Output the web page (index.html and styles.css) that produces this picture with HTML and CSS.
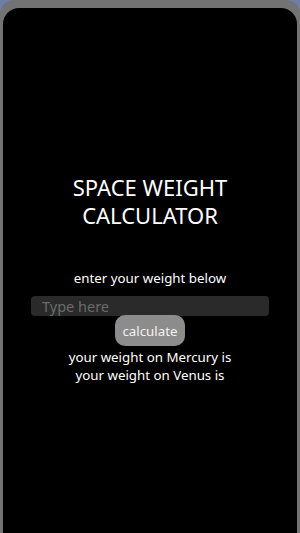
FILE: index.html
```html
<!DOCTYPE html>
<html lang="en">
<head>
    <meta charset="UTF-8">
    <meta name="viewport" content="width=device-width, initial-scale=1.0">
    <title>Space Weight Calculator</title>
    <link rel="stylesheet" href="styles.css">
</head>
<body>
    <div class="phone">
        <div class="screen">
            <h1 class="title">SPACE WEIGHT<br>CALCULATOR</h1>
            <p class="prompt">enter your weight below</p>
            <input class="weight-input" type="text" placeholder="Type here">
            <button class="calc-btn">calculate</button>
            <div class="results">
                <p>your weight on Mercury is</p>
                <p>your weight on Venus is</p>
            </div>
        </div>
    </div>
</body>
</html>
```

FILE: styles.css
```css
* {
    margin: 0;
    padding: 0;
    box-sizing: border-box;
}

html, body {
    height: 100%;
}

body {
    background: #6d7ea9;
    font-family: 'Noto Sans', 'Open Sans', sans-serif;
    color: #fff;
    overflow: hidden;
}

.phone {
    height: 100%;
    background: #737373;
    border-radius: 14px 14px 0 0;
    padding: 8px 3px 0 3px;
}

.screen {
    height: 100%;
    background: #000;
    border-radius: 16px 16px 0 0;
    display: flex;
    flex-direction: column;
    align-items: center;
    padding-top: 165px;
}

.title {
    font-size: 22px;
    font-weight: 400;
    line-height: 28px;
    text-align: center;
}

.prompt {
    margin-top: 39px;
    font-size: 13.3px;
    line-height: 20px;
}

.weight-input {
    margin-top: 8px;
    width: 238px;
    height: 20px;
    border: none;
    border-radius: 4px;
    background: #2a2a2a;
    color: #ddd;
    font-family: inherit;
    font-size: 14.5px;
    padding: 0 11px;
    outline: none;
}

.weight-input::placeholder {
    color: #6a6a6a;
}

.calc-btn {
    margin-top: -1px;
    height: 31px;
    padding: 0 7px;
    border: none;
    border-radius: 10px;
    background: #8c8c8c;
    color: #f2f2f2;
    font-family: inherit;
    font-size: 13.3px;
}

.results {
    text-align: center;
    font-size: 13.3px;
    line-height: 18px;
    margin-top: 2px;
}
```
